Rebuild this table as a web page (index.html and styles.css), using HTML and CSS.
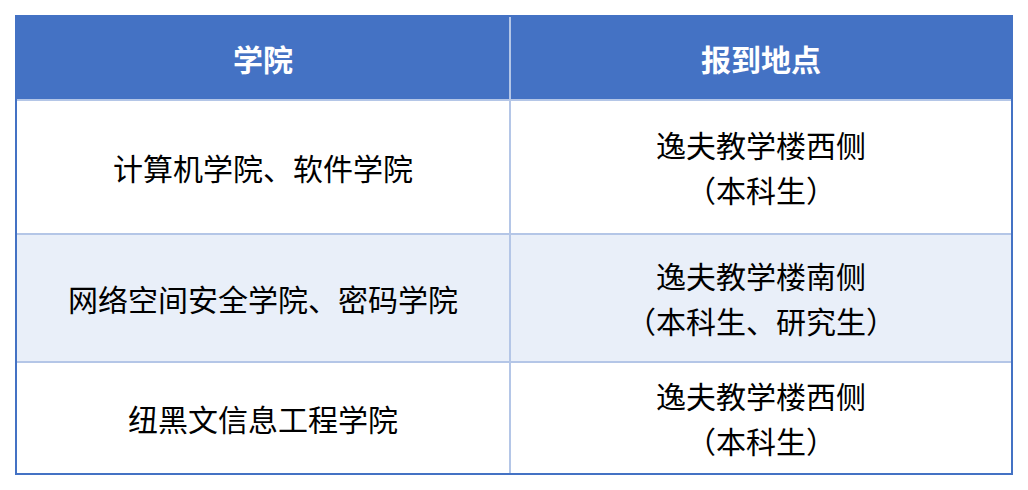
FILE: index.html
```html
<!DOCTYPE html>
<html lang="zh-CN">
<head>
<meta charset="utf-8">
<link rel="stylesheet" href="styles.css">
</head>
<body>
<div class="table">
  <div class="cell head">学院</div>
  <div class="cell head">报到地点</div>
  <div class="cell r1">计算机学院、软件学院</div>
  <div class="cell r1">逸夫教学楼西侧<br>（本科生）</div>
  <div class="cell r2 alt">网络空间安全学院、密码学院</div>
  <div class="cell r2 alt">逸夫教学楼南侧<br>（本科生、研究生）</div>
  <div class="cell r3">纽黑文信息工程学院</div>
  <div class="cell r3">逸夫教学楼西侧<br>（本科生）</div>
</div>
</body>
</html>
```
FILE: styles.css
```css
html, body {
  margin: 0;
  padding: 0;
  background: #ffffff;
}
body {
  padding: 15px;
  font-family: "Noto Sans CJK SC", "Noto Sans", sans-serif;
}
.table {
  width: 994px;
  display: grid;
  grid-template-columns: 492px 500px;
  grid-template-rows: 82px 132px 126px 110px;
  gap: 2px;
  background: #b4c6e7;
  border: 2px solid #4472c4;
}
.cell {
  background: #ffffff;
  color: #000000;
  font-size: 30px;
  line-height: 45px;
  display: flex;
  align-items: center;
  justify-content: center;
  text-align: center;
}
.head {
  background: #4472c4;
  color: #ffffff;
  font-weight: bold;
}
.alt {
  background: #e9eff9;
}
```
